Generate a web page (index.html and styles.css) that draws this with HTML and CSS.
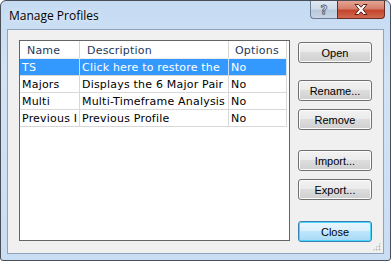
FILE: index.html
```html
<!DOCTYPE html>
<html lang="en">
<head>
    <meta charset="UTF-8">
    <title>Manage Profiles</title>
    <link rel="stylesheet" href="styles.css">
</head>
<body>
    <div class="window">
        <div class="titlebar">
            <span class="title">Manage Profiles</span>
            <div class="caption-buttons">
                <div class="cap-btn help">?</div>
                <div class="cap-btn close">
                    <svg width="14" height="11" viewBox="0 0 14 11">
                        <polygon points="1,0.5 4.5,0.5 7,3.2 9.5,0.5 13,0.5 8.9,5.5 13,10.5 9.5,10.5 7,7.8 4.5,10.5 1,10.5 5.1,5.5"
                                 fill="#fff" stroke="#5b1f1a" stroke-width="1"/>
                    </svg>
                </div>
            </div>
        </div>

        <div class="client">
            <div class="list">
                <div class="row head">
                    <div class="cell name">Name</div>
                    <div class="cell desc">Description</div>
                    <div class="cell opt">Options</div>
                </div>
                <div class="row selected">
                    <div class="cell name">TS</div>
                    <div class="cell desc">Click here to restore the</div>
                    <div class="cell opt">No</div>
                </div>
                <div class="row">
                    <div class="cell name">Majors</div>
                    <div class="cell desc">Displays the 6 Major Pair</div>
                    <div class="cell opt">No</div>
                </div>
                <div class="row">
                    <div class="cell name">Multi</div>
                    <div class="cell desc">Multi-Timeframe Analysis</div>
                    <div class="cell opt">No</div>
                </div>
                <div class="row">
                    <div class="cell name">Previous I</div>
                    <div class="cell desc">Previous Profile</div>
                    <div class="cell opt">No</div>
                </div>
            </div>

            <div class="buttons">
                <button class="btn open">Open</button>
                <button class="btn rename">Rename...</button>
                <button class="btn remove">Remove</button>
                <button class="btn import">Import...</button>
                <button class="btn export">Export...</button>
                <button class="btn close-btn default">Close</button>
            </div>

            <div class="grip"></div>
        </div>
    </div>
</body>
</html>
```

FILE: styles.css
```css
/* Окно диалога */
body {
    margin: 0;
    padding: 0;
    background: #fff;
}

.window {
    width: 391px;
    height: 261px;
    box-sizing: border-box;
    border: 1px solid #4a4f57;
    border-radius: 6px 6px 3px 3px;
    background: linear-gradient(to bottom, #c5dbf2 0%, #d2e3f6 30%, #c9ddf3 100%);
    padding: 0 6px 6px 6px;
    display: flex;
    flex-direction: column;
    position: relative;
}

.titlebar {
    height: 28px;
    display: flex;
    align-items: flex-start;
    justify-content: space-between;
}

.title {
    font-family: "Open Sans", sans-serif;
    font-size: 12px;
    color: #000;
    margin: 6px 0 0 2px;
    text-shadow: 0 0 6px rgba(255, 255, 255, 0.9);
}

.caption-buttons {
    display: flex;
    margin-right: -1px;
}

.cap-btn {
    height: 18px;
    box-sizing: border-box;
    border: 1px solid #6b7d95;
    border-top: none;
    display: flex;
    align-items: center;
    justify-content: center;
}

.cap-btn.help {
    width: 27px;
    border-right: none;
    border-radius: 0 0 0 4px;
    background: linear-gradient(to bottom, #dfe8f3 0%, #cfdbe9 45%, #b9c9dc 55%, #c8d6e6 100%);
    font-family: "DejaVu Sans", sans-serif;
    font-size: 12px;
    font-weight: bold;
    color: #eef3f9;
    -webkit-text-stroke: 0.8px #4d5d72;
}

.cap-btn.close {
    width: 48px;
    border-color: #6b2a24;
    border-radius: 0 0 4px 0;
    background: linear-gradient(to bottom, #e5a592 0%, #d47f6c 45%, #c4442c 55%, #cf6a4f 100%);
}

.client {
    flex: 1;
    background: #f0f0f0;
    border: 1px solid #8ea3bd;
    display: flex;
    padding: 10px 0 0 11px;
    position: relative;
}

/* Список профилей */
.list {
    width: 269px;
    height: 199px;
    border: 1px solid #646464;
    background: #fff;
    overflow: hidden;
    font-family: "DejaVu Sans", sans-serif;
    font-size: 11px;
    letter-spacing: 0.2px;
    color: #000;
}

.row {
    display: flex;
    width: 267px;
    height: 17px;
    box-sizing: border-box;
    border-bottom: 1px solid #d8d8d8;
}

.cell {
    box-sizing: border-box;
    height: 16px;
    line-height: 18px;
    padding-left: 2px;
    border-right: 1px solid #d8d8d8;
    white-space: nowrap;
    overflow: hidden;
}

.cell.name { width: 60px; }
.cell.desc { width: 149px; }
.cell.opt { width: 58px; }

.row.head {
    height: 18px;
    border-bottom-color: #ececec;
}

.row.head .cell {
    height: 17px;
    line-height: 20px;
    padding-left: 7px;
    color: #1e395b;
    border-right-color: #d5d5d5;
}

.row.head .cell.opt {
    padding-left: 6px;
}

.row.selected {
    background: #3399ff;
    color: #fff;
}

.row.selected .cell {
    border-right-color: #c8dff7;
}

/* Кнопки */
.buttons {
    display: flex;
    flex-direction: column;
    margin-left: 8px;
    padding-top: 2px;
}

.btn {
    width: 74px;
    height: 21px;
    box-sizing: border-box;
    padding: 0;
    border: 1px solid #707070;
    border-radius: 3px;
    background: linear-gradient(to bottom, #f2f2f2 0%, #ebebeb 45%, #dddddd 50%, #cfcfcf 100%);
    font-family: "Liberation Sans", sans-serif;
    font-size: 11px;
    color: #000;
    box-shadow: inset 0 0 0 1px #fcfcfc;
}

.btn.rename { margin-top: 17px; }
.btn.remove { margin-top: 8px; }
.btn.import { margin-top: 20px; }
.btn.export { margin-top: 8px; }
.btn.close-btn { margin-top: 21px; }

.btn.default {
    border-color: #3c7fb1;
    box-shadow: inset 0 0 0 1px #48d7fb;
    background: linear-gradient(to bottom, #eaf6fd 0%, #d9f0fc 45%, #bee6fd 50%, #a7d9f5 100%);
}

.grip {
    position: absolute;
    right: 2px;
    bottom: 2px;
    width: 9px;
    height: 9px;
    background:
        radial-gradient(circle, #b8b8b8 0.9px, transparent 1.1px) 0 0 / 3px 3px;
    clip-path: polygon(100% 0, 100% 100%, 0 100%);
}
```
